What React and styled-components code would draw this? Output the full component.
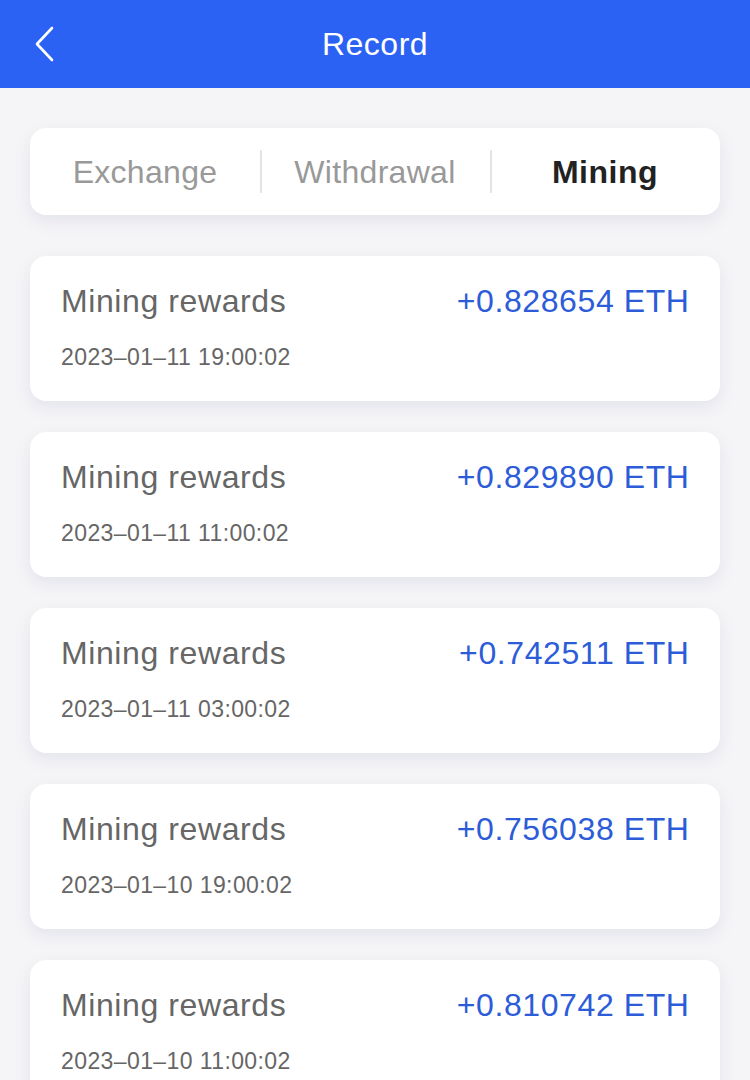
import React from 'react';
import styled, { createGlobalStyle } from 'styled-components';

const GlobalStyle = createGlobalStyle`
  html, body {
    margin: 0;
    padding: 0;
    background: #f5f5f7;
    font-family: "Liberation Sans", Arial, sans-serif;
  }
`;

const records = [
  { id: 1, amount: '+0.828654 ETH', time: '2023–01–11 19:00:02' },
  { id: 2, amount: '+0.829890 ETH', time: '2023–01–11 11:00:02' },
  { id: 3, amount: '+0.742511 ETH', time: '2023–01–11 03:00:02' },
  { id: 4, amount: '+0.756038 ETH', time: '2023–01–10 19:00:02' },
  { id: 5, amount: '+0.810742 ETH', time: '2023–01–10 11:00:02' },
];

const tabs = ['Exchange', 'Withdrawal', 'Mining'];

const App = () => {
  return (
    <Page>
      <GlobalStyle />
      <Header>
        <BackButton aria-label="back">
          <svg width="24" height="36" viewBox="0 0 24 36" fill="none">
            <path d="M19 2 L4 18 L19 34" stroke="#fff" strokeWidth="2.6" strokeLinecap="round" strokeLinejoin="round" />
          </svg>
        </BackButton>
        <Title>Record</Title>
      </Header>

      <Content>
        <Tabs>
          {tabs.map((t, i) => (
            <Tab key={t} active={t === 'Mining'} divider={i > 0}>
              {t}
            </Tab>
          ))}
        </Tabs>

        <List>
          {records.map((r) => (
            <Card key={r.id}>
              <Row>
                <Label>Mining rewards</Label>
                <Amount>{r.amount}</Amount>
              </Row>
              <Time>{r.time}</Time>
            </Card>
          ))}
        </List>
      </Content>
    </Page>
  );
};

const Page = styled.div`
  min-height: 1080px;
  background: #f5f5f7;
`;

const Header = styled.header`
  position: relative;
  height: 88px;
  background: #2c62f4;
  display: flex;
  align-items: center;
  justify-content: center;
`;

const BackButton = styled.button`
  position: absolute;
  left: 33px;
  top: 26px;
  padding: 0;
  border: none;
  background: none;
  display: flex;
`;

const Title = styled.h1`
  margin: 0;
  color: #fff;
  font-size: 32px;
  font-weight: 400;
  letter-spacing: 0.5px;
`;

const Content = styled.main`
  padding: 40px 30px 0;
`;

const Tabs = styled.nav`
  display: grid;
  grid-template-columns: repeat(3, 1fr);
  height: 87px;
  background: #fff;
  border-radius: 16px;
  box-shadow: 0 6px 16px rgba(110, 110, 170, 0.13);
  align-items: center;
`;

const Tab = styled.div`
  position: relative;
  text-align: center;
  font-size: 32px;
  letter-spacing: ${(p) => (p.active ? '0.5px' : '0.3px')};
  color: ${(p) => (p.active ? '#222' : '#999')};
  font-weight: ${(p) => (p.active ? 700 : 400)};
  line-height: 44px;

  &::before {
    content: '';
    display: ${(p) => (p.divider ? 'block' : 'none')};
    position: absolute;
    left: 0;
    top: 0;
    width: 2px;
    height: 43px;
    background: #e4e4e4;
  }
`;

const List = styled.div`
  margin-top: 41px;
  display: flex;
  flex-direction: column;
  gap: 31px;
`;

const Card = styled.div`
  background: #fff;
  border-radius: 16px;
  box-shadow: 0 6px 16px rgba(110, 110, 170, 0.13);
  padding: 26px 31px 29px;
`;

const Row = styled.div`
  display: flex;
  justify-content: space-between;
  align-items: center;
  line-height: 38px;
`;

const Label = styled.span`
  font-size: 32px;
  color: #666;
  letter-spacing: 0.6px;
`;

const Amount = styled.span`
  font-size: 32px;
  color: #2d5cd8;
  letter-spacing: 0.6px;
  margin-right: -0.6px;
`;

const Time = styled.div`
  margin-top: 22px;
  font-size: 23px;
  line-height: 30px;
  color: #666;
  letter-spacing: 0.4px;
`;

export default App;
